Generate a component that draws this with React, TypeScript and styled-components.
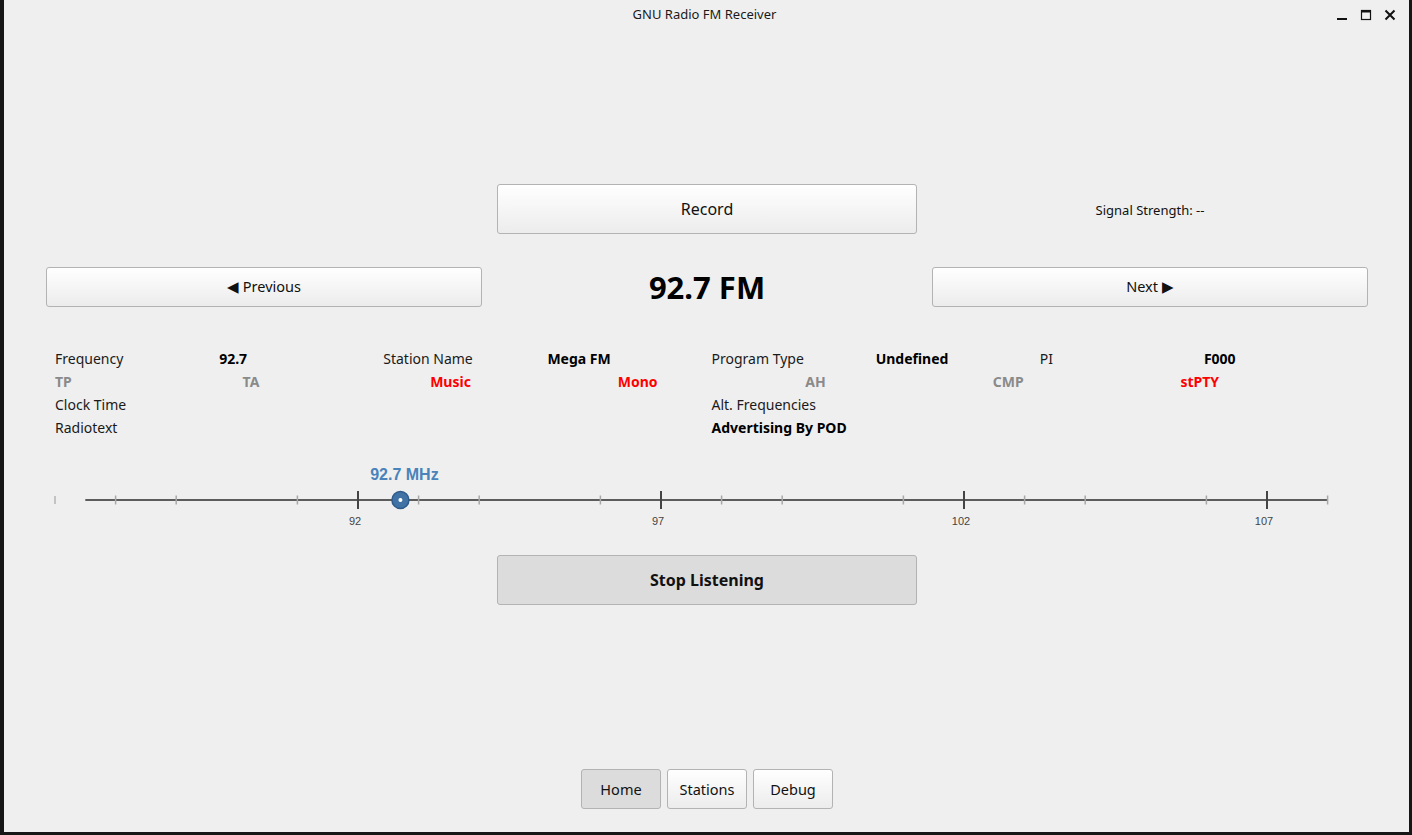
import styled, { createGlobalStyle } from "styled-components";

const GlobalStyle = createGlobalStyle`
  html, body {
    margin: 0;
    padding: 0;
    background: #161616;
  }
  * { box-sizing: border-box; }
`;

const UI_FONT = `"Noto Sans", "Open Sans", sans-serif`;

const PX_PER_MHZ = 60.6;
const fx = (f: number) => 312 + (f - 92) * PX_PER_MHZ;

const MINOR = [88, 89, 91, 93, 94, 96, 98, 99, 101, 103, 104, 106, 108];
const MAJOR = [92, 97, 102, 107];

type Tone = "plain" | "value" | "dim" | "alert";

const row1: { text: string; tone: Tone }[] = [
    { text: "Frequency", tone: "plain" },
    { text: "92.7", tone: "value" },
    { text: "Station Name", tone: "plain" },
    { text: "Mega FM", tone: "value" },
    { text: "Program Type", tone: "plain" },
    { text: "Undefined", tone: "value" },
    { text: "PI", tone: "plain" },
    { text: "F000", tone: "value" },
];

const row2: { text: string; tone: Tone }[] = [
    { text: "TP", tone: "dim" },
    { text: "TA", tone: "dim" },
    { text: "Music", tone: "alert" },
    { text: "Mono", tone: "alert" },
    { text: "AH", tone: "dim" },
    { text: "CMP", tone: "dim" },
    { text: "stPTY", tone: "alert" },
];

export default function App() {
    const freq = 92.7;

    return (
        <>
            <GlobalStyle />
            <Window>
                <TitleBar>
                    <Title>GNU Radio FM Receiver</Title>
                    <WindowControls>
                        <WinButton aria-label="minimize">
                            <svg width="12" height="12" viewBox="0 0 12 12">
                                <rect x="1" y="9" width="10" height="2" fill="#111" />
                            </svg>
                        </WinButton>
                        <WinButton aria-label="maximize">
                            <svg width="12" height="12" viewBox="0 0 12 12">
                                <rect x="1.5" y="1.5" width="9" height="9" fill="none" stroke="#111" strokeWidth="1.2" />
                                <rect x="1.5" y="1.5" width="9" height="2" fill="#111" />
                            </svg>
                        </WinButton>
                        <WinButton aria-label="close">
                            <svg width="12" height="12" viewBox="0 0 12 12">
                                <path d="M1.5 1.5 L10.5 10.5 M10.5 1.5 L1.5 10.5" stroke="#111" strokeWidth="2" />
                            </svg>
                        </WinButton>
                    </WindowControls>
                </TitleBar>

                <Content>
                    <Controls>
                        <span />
                        <Cell>
                            <BigButton>Record</BigButton>
                        </Cell>
                        <Cell>
                            <Signal>Signal Strength: --</Signal>
                        </Cell>

                        <NavButton>◀ Previous</NavButton>
                        <Cell>
                            <Station>92.7 FM</Station>
                        </Cell>
                        <NavButton>Next ▶</NavButton>
                    </Controls>

                    <Info>
                        <InfoRow $cols={8}>
                            {row1.map((c) => (
                                <InfoText key={c.text} $tone={c.tone}>{c.text}</InfoText>
                            ))}
                        </InfoRow>
                        <InfoRow $cols={7}>
                            {row2.map((c) => (
                                <InfoText key={c.text} $tone={c.tone}>{c.text}</InfoText>
                            ))}
                        </InfoRow>
                        <InfoRow $cols={2}>
                            <InfoText $tone="plain">Clock Time</InfoText>
                            <InfoText $tone="plain">Alt. Frequencies</InfoText>
                        </InfoRow>
                        <InfoRow $cols={2}>
                            <InfoText $tone="plain">Radiotext</InfoText>
                            <InfoText $tone="value">Advertising By POD</InfoText>
                        </InfoRow>
                    </Info>

                    <Tuner>
                        <TunerLabelRow>
                            <TunerLabel style={{ left: fx(freq) + 4 }}>{freq} MHz</TunerLabel>
                        </TunerLabelRow>
                        <svg width="1322" height="50" viewBox="0 0 1322 50">
                            <line x1={fx(87)} y1="11" x2={fx(87)} y2="19" stroke="#b4b4b4" strokeWidth="1.5" />
                            <line x1={fx(87.5)} y1="15" x2={fx(108)} y2="15" stroke="#5c5c5c" strokeWidth="2" />
                            {MINOR.map((f) => (
                                <line key={f} x1={fx(f)} y1="10.5" x2={fx(f)} y2="19.5" stroke="#a8a8a8" strokeWidth="1.5" />
                            ))}
                            {MAJOR.map((f) => (
                                <g key={f}>
                                    <line x1={fx(f)} y1="6" x2={fx(f)} y2="24" stroke="#444" strokeWidth="2" />
                                    <text
                                        x={fx(f) - 3}
                                        y="40"
                                        textAnchor="middle"
                                        fontFamily='"Liberation Sans", Arial, sans-serif'
                                        fontSize="11"
                                        fill="#444"
                                    >
                                        {f}
                                    </text>
                                </g>
                            ))}
                            <circle cx={fx(freq)} cy="15" r="8.5" fill="#4172a6" stroke="#2e5b8a" strokeWidth="1.5" />
                            <circle cx={fx(freq)} cy="15" r="2" fill="#fff" />
                        </svg>
                    </Tuner>

                    <Center>
                        <BigButton $pressed $bold>Stop Listening</BigButton>
                    </Center>

                    <Tabs>
                        <TabButton $active>Home</TabButton>
                        <TabButton>Stations</TabButton>
                        <TabButton>Debug</TabButton>
                    </Tabs>
                </Content>
            </Window>
        </>
    );
}

const Window = styled.div`
    margin-left: 4px;
    width: 1405px;
    height: 832px;
    background: #efefef;
    display: flex;
    flex-direction: column;
    font-family: ${UI_FONT};
    color: #111;
`;

const TitleBar = styled.div`
    position: relative;
    height: 28px;
    display: flex;
    align-items: center;
    justify-content: center;
`;

const Title = styled.div`
    font-size: 13px;
    color: #1a1a1a;
    margin-left: -4px;
`;

const WindowControls = styled.div`
    position: absolute;
    right: 12px;
    top: 8px;
    display: flex;
    gap: 10px;
`;

const WinButton = styled.div`
    width: 14px;
    height: 14px;
    display: flex;
    align-items: center;
    justify-content: center;
`;

const Content = styled.div`
    flex: 1;
    display: flex;
    flex-direction: column;
    padding: 156px 41px 23px 42px;
`;

const Controls = styled.div`
    display: grid;
    grid-template-columns: 436px 1fr 436px;
    grid-template-rows: 50px 40px;
    row-gap: 33px;
`;

const Cell = styled.div`
    display: flex;
    align-items: center;
    justify-content: center;
`;

const buttonBase = `
    border: 1px solid #b3b3b3;
    border-radius: 3px;
    background: linear-gradient(#ffffff, #ececec);
    font-family: ${UI_FONT};
    color: #111;
    display: flex;
    align-items: center;
    justify-content: center;
    padding: 0;
    cursor: pointer;
`;

const BigButton = styled.button<{ $pressed?: boolean; $bold?: boolean }>`
    ${buttonBase}
    width: 420px;
    height: 50px;
    font-size: 16px;
    font-weight: ${({ $bold }) => ($bold ? 700 : 400)};
    background: ${({ $pressed }) => ($pressed ? "#dcdcdc" : "linear-gradient(#ffffff, #ececec)")};
`;

const NavButton = styled.button`
    ${buttonBase}
    width: 436px;
    height: 40px;
    font-size: 14.5px;
    padding-bottom: 2px;
`;

const Signal = styled.div`
    font-size: 13px;
    color: #111;
    padding-top: 2px;
`;

const Station = styled.div`
    font-size: 31px;
    font-weight: 700;
    color: #000;
`;

const Info = styled.div`
    margin-top: 40px;
    padding-left: 9px;
    display: flex;
    flex-direction: column;
`;

const InfoRow = styled.div<{ $cols: number }>`
    display: grid;
    grid-template-columns: repeat(${({ $cols }) => $cols}, 1fr);
    height: 23px;
    align-items: center;
`;

const toneColor: Record<Tone, string> = {
    plain: "#1a1a1a",
    value: "#000",
    dim: "#8a8a8a",
    alert: "#ff0000",
};

const InfoText = styled.span<{ $tone: Tone }>`
    font-size: 14px;
    white-space: nowrap;
    color: ${({ $tone }) => toneColor[$tone]};
    font-weight: ${({ $tone }) => ($tone === "plain" ? 400 : 700)};
`;

const Tuner = styled.div`
    margin-top: 26px;
    display: flex;
    flex-direction: column;
`;

const TunerLabelRow = styled.div`
    position: relative;
    height: 20px;
`;

const TunerLabel = styled.div`
    position: absolute;
    top: 0;
    transform: translateX(-50%);
    font-family: "Liberation Sans", Arial, sans-serif;
    font-weight: 700;
    font-size: 16px;
    line-height: 20px;
    color: #4a82ba;
    white-space: nowrap;
`;

const Center = styled.div`
    margin-top: 20px;
    display: flex;
    justify-content: center;
`;

const Tabs = styled.div`
    margin-top: auto;
    display: flex;
    justify-content: center;
    gap: 6px;
`;

const TabButton = styled.button<{ $active?: boolean }>`
    ${buttonBase}
    width: 80px;
    height: 40px;
    font-size: 14.5px;
    background: ${({ $active }) => ($active ? "#dcdcdc" : "linear-gradient(#ffffff, #ececec)")};
`;
